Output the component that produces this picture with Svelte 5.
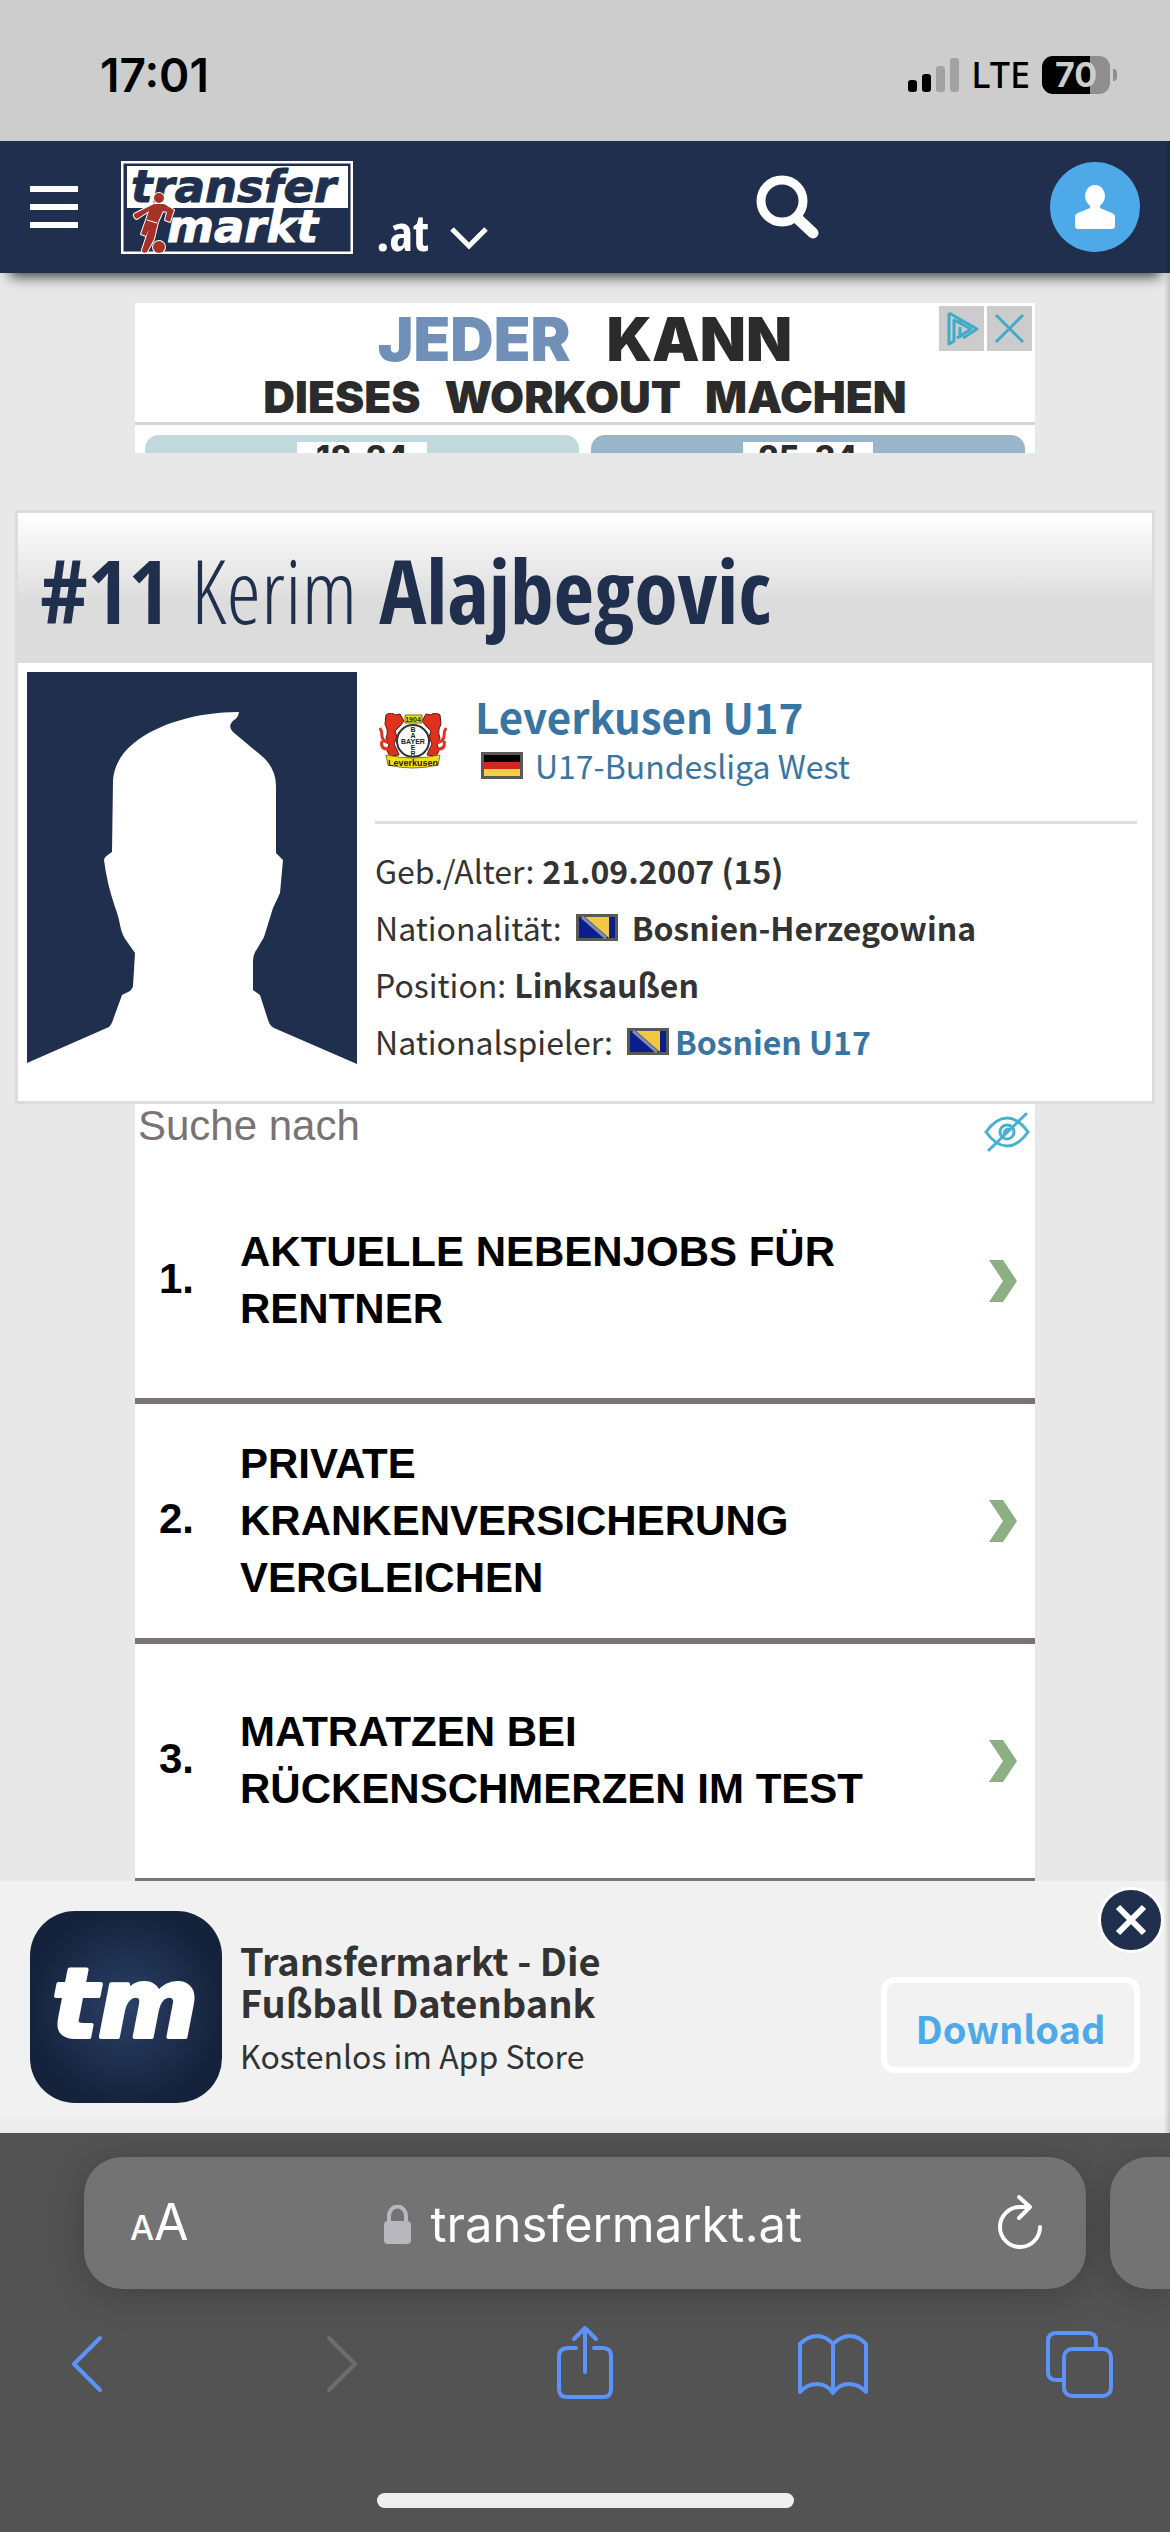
<script>
  const offers = [
    'AKTUELLE NEBENJOBS FÜR RENTNER',
    'PRIVATE KRANKENVERSICHERUNG VERGLEICHEN',
    'MATRATZEN BEI RÜCKENSCHMERZEN IM TEST'
  ];
</script>

{#snippet bosnia()}
  <svg class="flag" viewBox="0 0 42 27" role="img" aria-label="Bosnien-Herzegowina">
    <rect width="42" height="27" fill="#595959" />
    <rect x="3" y="3" width="36" height="21" fill="#0a1f8c" />
    <path d="M9 3h24v21z" fill="#f3c843" />
    <path d="M6 3l24 21" stroke="#7f8cae" stroke-width="3" />
  </svg>
{/snippet}

<div class="screen">
  <div class="status">
    <time>17:01</time>
    <div class="status-right">
      <svg class="signal" viewBox="0 0 51 34" aria-hidden="true">
        <rect y="22" width="9" height="12" rx="3" />
        <rect x="14" y="16" width="9" height="18" rx="3" />
        <rect x="28" y="8" width="9" height="26" rx="3" fill="#a2a2a2" />
        <rect x="42" width="9" height="34" rx="3" fill="#a2a2a2" />
      </svg>
      <span class="lte">LTE</span>
      <div class="battery"><span>70</span></div>
    </div>
  </div>

  <div class="web">
    <header class="top">
      <button class="menu" aria-label="Menü"><i></i><i></i><i></i></button>
      <a class="logo" href="#home" aria-label="Transfermarkt">
        <svg viewBox="0 0 232 93">
          <rect x="1" y="1" width="230" height="91" fill="#1f2f4d" stroke="#fff" stroke-width="3" />
          <rect x="6" y="5" width="221" height="42" fill="#fff" />
          <text class="wordmark" x="10" y="41" fill="#1f2f4d" stroke="#1f2f4d">transfer</text>
          <text class="wordmark" x="46" y="81" fill="#fff" stroke="#fff">markt</text>
          <g fill="#a63126" stroke="#fff" stroke-width="2" paint-order="stroke" stroke-linejoin="round">
            <path d="M13 55Q12 53 15 52L33 43L43 43L53 49L49 61L44 59L46 51L42 50L37 61L33 78L26 91Q21 93 21 89L28 68L25 75L20 73L25 59L28 50L16 58Q14 58 13 55Z" />
            <circle cx="38" cy="37" r="5" />
            <circle cx="38" cy="86" r="6" />
          </g>
          <path d="M26 59l10 3" stroke="#fff" stroke-width="1" />
        </svg>
      </a>
      <button class="domain">
        <span>.at</span>
        <svg viewBox="0 0 40 24" aria-hidden="true"><path d="M3 3l17 17 17-17" fill="none" stroke="#fff" stroke-width="5" /></svg>
      </button>
      <button class="search" aria-label="Suche">
        <svg viewBox="0 0 64 64"><circle cx="26" cy="26" r="21" fill="none" stroke="#fff" stroke-width="9" /><path d="M41 43l16 15" stroke="#fff" stroke-width="11" stroke-linecap="round" /></svg>
      </button>
      <button class="avatar" aria-label="Profil">
        <svg viewBox="0 0 90 90"><circle cx="45" cy="45" r="45" fill="#4da9e8" /><ellipse cx="45" cy="34" rx="10" ry="11" fill="#fff" /><path d="M40 43h10v3l12 5q3 1 3 4v9q0 3-3 3H28q-3 0-3-3v-9q0-3 3-4l12-5z" fill="#fff" /></svg>
      </button>
    </header>

    <section class="promo" aria-label="Anzeige">
      <h2><b>JEDER</b> <span>KANN</span></h2>
      <h3><span>DIESES</span> <span>WORKOUT</span> <span>MACHEN</span></h3>
      <div class="promo-cards">
        <div class="age"><span>18-24</span></div>
        <div class="age blue"><span>25-34</span></div>
      </div>
      <div class="promo-tools">
        <button aria-label="AdChoices"><svg viewBox="0 0 45 45"><path d="M10 7v31l5-3V14l17 9-14 9" fill="none" stroke="#3fabc9" stroke-width="3" stroke-linejoin="round" /><path d="M10 7l28 16-14 9M21 21v11" fill="none" stroke="#3fabc9" stroke-width="3" stroke-linejoin="round" /><circle cx="21" cy="16" r="2" fill="#3fabc9" /></svg></button>
        <button aria-label="Anzeige schließen"><svg viewBox="0 0 45 45"><path d="M9 9l27 27M36 9L9 36" stroke="#3fabc9" stroke-width="3" /></svg></button>
      </div>
    </section>

    <main class="player">
      <h1><strong>#11</strong> <span>Kerim</span> <strong>Alajbegovic</strong></h1>
      <div class="player-body">
        <svg class="photo" viewBox="0 0 330 420" role="img" aria-label="Kerim Alajbegovic">
          <rect width="330" height="392" fill="#1f2f4d" />
          <path fill="#fff" d="M0 420V391L82 355Q85 352 87 345L95 323L99 321Q105 319 106 314L108 281L101 271Q95 264 93 253Q92 246 88 235Q80 212 77 188Q77 185 85 180L86 108Q88 86 107 71C130 52 170 40 212 40Q211 46 207 48Q200 54 206 60L236 85Q249 97 249 114V181L256 188L253 221L246 236L237 265L230 277Q226 282 226 290V318L233 323L241 348Q243 354 247 356L330 392V420Z" />
        </svg>
        <div class="info">
          <div class="club">
            <svg class="crest" viewBox="0 0 70 56" role="img" aria-label="Bayer Leverkusen">
              <g fill="#e0301e" stroke="#5c1510" stroke-width="1">
                <path d="M8 2q5-4 9 0l5-1 4 7-4 5-5 5 2 6-3 7 3 6 2 5-9 1-3-5 2-7-3-6q2-4 1-9l-2-5z" />
                <path d="M11 30q-7-2-7-7t-2-8M10 36q-8 0-6-8" fill="none" stroke="#e0301e" stroke-width="3" />
                <path d="M62 2q-5-4-9 0l-5-1-4 7 4 5 5 5-2 6 3 7-3 6-2 5 9 1 3-5-2-7 3-6q-2-4-1-9l2-5z" />
                <path d="M59 30q7-2 7-7t2-8M60 36q8 0 6-8" fill="none" stroke="#e0301e" stroke-width="3" />
              </g>
              <path d="M27 2h17v8H27z" fill="#f2df1c" stroke="#7a6f10" />
              <circle cx="35" cy="28" r="16" fill="#fff" stroke="#333" stroke-width="2" />
              <path d="M8 42q27 6 54 0l-2 10q-25 6-50 0z" fill="#f2df1c" stroke="#8a7d10" />
              <g class="crest-text" text-anchor="middle">
                <text x="35" y="9">1904</text>
                <text x="35" y="31">BAYER</text>
                <text x="35" y="19">B</text><text x="35" y="25">A</text><text x="35" y="37">E</text><text x="35" y="43">R</text>
                <text class="crest-name" x="35" y="53">Leverkusen</text>
              </g>
            </svg>
            <div class="club-text">
              <a class="club-name" href="#club">Leverkusen U17</a>
              <div class="league">
                <svg class="flag" viewBox="0 0 42 27" role="img" aria-label="Deutschland">
                  <rect width="42" height="27" fill="#595959" /><rect x="3" y="3" width="36" height="7" fill="#000" /><rect x="3" y="10" width="36" height="7" fill="#d0281c" /><rect x="3" y="17" width="36" height="7" fill="#f7ce46" />
                </svg>
                <a href="#league">U17-Bundesliga West</a>
              </div>
            </div>
          </div>
          <dl>
            <div><dt>Geb./Alter:</dt><dd>21.09.2007 (15)</dd></div>
            <div class="nation"><dt>Nationalität:</dt><dd>{@render bosnia()}Bosnien-Herzegowina</dd></div>
            <div><dt>Position:</dt><dd>Linksaußen</dd></div>
            <div class="squad"><dt>Nationalspieler:</dt><dd>{@render bosnia()}<a href="#bosnien">Bosnien U17</a></dd></div>
          </dl>
        </div>
      </div>
    </main>

    <section class="offers">
      <div class="offers-head">
        <span>Suche nach</span>
        <button aria-label="Anzeige ausblenden"><svg viewBox="0 0 46 40" fill="none" stroke="#4ab0cf" stroke-width="3" stroke-linecap="round"><path d="M2 20Q12 6 23 6T44 20Q34 34 23 34T2 20Z" /><circle cx="23" cy="20" r="7" /><path d="M20 23q0-5 4-6M5 38L42 2" /></svg></button>
      </div>
      <ol>
        {#each offers as offer, i}
          <li><a href="#offer{i + 1}">
            <span class="num">{i + 1}.</span><span class="offer">{offer}</span>
            <svg viewBox="0 0 30 42" aria-hidden="true"><path d="M1 0h14l14 21-14 21H1l14-21z" fill="#8cb084" /></svg>
          </a></li>
        {/each}
      </ol>
    </section>

    <aside class="app">
      <svg class="app-icon" viewBox="0 0 192 192" role="img" aria-label="Transfermarkt App">
        <defs><radialGradient id="glow"><stop stop-color="#2b4168" /><stop offset="1" stop-color="#15223b" /></radialGradient></defs>
        <rect width="192" height="192" rx="45" fill="url(#glow)" />
        <text class="tm" x="22" y="126" fill="#fff" stroke="#fff">tm</text>
      </svg>
      <div class="app-text"><strong>Transfermarkt - Die Fußball Datenbank</strong><span>Kostenlos im App Store</span></div>
      <a class="download" href="#download">Download</a>
      <button class="close" aria-label="Schließen"><svg viewBox="0 0 60 60"><path d="M17 17l26 26M43 17L17 43" stroke="#fff" stroke-width="6" /></svg></button>
    </aside>
  </div>

  <footer class="safari">
    <div class="tabs">
      <div class="address">
        <button class="aa" aria-label="Textgröße"><small>A</small>A</button>
        <button class="url">
          <svg viewBox="0 0 27 40" aria-hidden="true"><path d="M5 18V11a8 9 0 0 1 17 0v7" fill="none" stroke="#b8b7bd" stroke-width="4" /><rect y="16" width="27" height="23" rx="4" fill="#b8b7bd" /></svg>
          <span>transfermarkt.at</span>
        </button>
        <button class="reload" aria-label="Neu laden"><svg viewBox="0 0 46 56" fill="none" stroke="#fff" stroke-width="4" stroke-linecap="round" stroke-linejoin="round"><path d="M43 33A20 20 0 1 1 23 13H33M22 3l11 10-11 11" /></svg></button>
      </div>
      <div class="next-tab"></div>
    </div>
    <nav>
      <button aria-label="Zurück"><svg viewBox="0 0 80 76"><path d="M54 14L28 40l26 26" /></svg></button>
      <button aria-label="Vor" disabled><svg viewBox="0 0 80 76"><path d="M34 14l26 26-26 26" /></svg></button>
      <button aria-label="Teilen"><svg viewBox="0 0 80 76"><path d="M33 24h-7q-10 0-10 8v33q0 8 8 8h36q8 0 8-8V32q0-8-8-8h-9M42 48V4M31 15L42 4l11 11" /></svg></button>
      <button aria-label="Lesezeichen"><svg viewBox="0 0 80 76"><path d="M41 20Q34 12 25 12T8 20V68Q15 60 25 60T41 69Q47 60 57 60T74 68V20Q67 12 58 12T41 20V68" /></svg></button>
      <button aria-label="Tabs"><svg viewBox="0 0 80 76"><rect x="24" y="25" width="47" height="47" rx="8" /><path d="M24 56h-7q-9 0-9-8V17q0-8 8-8h32q8 0 8 8v8" /></svg></button>
    </nav>
    <div class="home"></div>
  </footer>
</div>

<style>
  :global(body) { margin: 0; background: #535353; }
  .screen { font-family: "Noto Sans CJK SC", "Noto Sans", sans-serif; color: #333; overflow: hidden; }
  * { box-sizing: border-box; }
  button { border: 0; padding: 0; background: none; color: inherit; font: inherit; cursor: pointer; }
  a { color: #3975a2; text-decoration: none; }
  svg { display: block; }
  h1, h2, h3, dl, dd, ol { margin: 0; padding: 0; }

  .status { display: flex; justify-content: space-between; align-items: center; height: 141px; padding: 8px 55px 0 100px; background: #cdcdcd; color: #000; font-family: Inter, sans-serif; }
  time { font-size: 46px; font-weight: 600; }
  .status-right { display: flex; align-items: center; gap: 12px; }
  .signal { width: 51px; height: 34px; }
  .lte { font-size: 36px; font-weight: 500; font-family: "Noto Sans", sans-serif; line-height: 40px; }
  .battery { position: relative; display: flex; align-items: center; justify-content: center; width: 68px; height: 38px; margin-right: 5px; border-radius: 11px; background: linear-gradient(90deg, #000 70%, #8f8f8f 70%); color: #cdcdcd; font-size: 34px; font-weight: 700; }
  .battery::after { content: ""; position: absolute; left: 71px; width: 4px; height: 12px; border-radius: 0 6px 6px 0; background: #8f8f8f; }

  .web { position: relative; background: #e8e8e8; }
  .web::after { content: ""; position: absolute; top: 0; right: 0; width: 6px; height: 100%; background: linear-gradient(90deg, transparent, rgba(0, 0, 0, 0.16)); }
  .top { position: relative; display: flex; align-items: center; height: 132px; padding: 0 30px; background: #1f2f4d; box-shadow: 0 14px 12px -10px rgba(0, 0, 0, 0.7); }
  .menu { display: flex; flex-direction: column; gap: 12px; width: 48px; }
  .menu i { height: 6px; background: #fff; }
  .logo { width: 232px; margin-left: 43px; }
  .wordmark { font: italic 700 45px "DejaVu Sans", sans-serif; stroke-width: 1; stroke-linejoin: round; }
  .tm { font: italic 700 96px "DejaVu Sans", sans-serif; stroke-width: 4; stroke-linejoin: round; }
  .domain { display: flex; align-items: center; gap: 20px; align-self: flex-end; margin: 0 0 14px 23px; color: #fff; }
  .domain span { font: 700 50px/54px "Open Sans Condensed", "Roboto Condensed", "Noto Sans CJK SC", sans-serif; }
  .domain svg { width: 40px; margin-top: 12px; }
  .search { margin-left: auto; width: 64px; }
  .avatar { width: 90px; margin-left: 230px; }

  .promo { position: relative; height: 150px; margin: 30px 135px 57px; overflow: hidden; background: #fff; color: #2c2b2b; text-align: center; font-family: Inter, sans-serif; }
  .promo h2 { display: flex; justify-content: center; gap: 36px; padding-top: 4px; font-size: 60px; line-height: 64px; font-weight: 900; }
  .promo h2 b { color: #7090b8; font-weight: 900; }
  .promo h3 { display: flex; justify-content: center; gap: 24px; height: 54px; border-bottom: 3px solid #d4d4d4; font-size: 44px; line-height: 52px; font-weight: 900; }
  .promo-cards { display: grid; grid-template-columns: 1fr 1fr; gap: 12px; padding: 10px; }
  .age { display: flex; justify-content: center; height: 60px; padding-top: 7px; border-radius: 14px; background: #c1d8dd; }
  .age.blue { background: #98b5c9; }
  .age span { width: 130px; height: 50px; background: #fff; font-size: 32px; line-height: 32px; font-weight: 800; }
  .promo-tools { position: absolute; top: 3px; right: 3px; display: flex; gap: 3px; }
  .promo-tools button { width: 45px; height: 45px; background: #ccc; }

  .player { margin: 0 15px; border: 3px solid #dcdcdc; background: #fff; }
  h1 { height: 150px; padding: 18px 22px 0; background: linear-gradient(#fff, #dcdcdc 60%); color: #1f2f4d; font: 700 88px/118px "Open Sans Condensed", "Roboto Condensed", "Noto Sans CJK SC", sans-serif; white-space: nowrap; }
  h1 span { font-family: "Open Sans Condensed Light", "Open Sans Condensed", "Roboto Condensed", sans-serif; font-weight: 300; }
  .player-body { display: flex; gap: 18px; padding: 9px 15px 9px 9px; }
  .photo { width: 330px; height: 420px; flex: none; }
  .info { flex: 1; }
  .club { display: flex; height: 149px; padding: 17px 0 0 3px; }
  .crest { width: 70px; height: 56px; margin-top: 24px; }
  .crest-text { font: 700 7px "Liberation Sans", sans-serif; fill: #222; }
  .crest-name { font-size: 9px; }
  .club-text { margin-left: 27px; }
  .club-name { display: block; font-size: 42px; line-height: 54px; font-weight: 700; }
  .league { display: flex; align-items: center; gap: 12px; padding-left: 6px; font-size: 32px; line-height: 44px; }
  .flag { width: 42px; height: 27px; flex: none; }
  dl { border-top: 3px solid #dcdcdc; padding-top: 18px; font-size: 32px; line-height: 57px; }
  dl div { display: flex; gap: 8px; }
  dd { display: flex; align-items: center; gap: 14px; font-weight: 700; }
  dl .nation, dl .squad { gap: 14px; }
  .squad dd { gap: 6px; }

  .offers { margin: 0 135px; background: #fff; color: #000; font-family: "Liberation Sans", Arial, sans-serif; font-size: 42px; }
  .offers-head { display: flex; justify-content: space-between; align-items: flex-start; height: 60px; padding: 0 5px 0 3px; color: #7a7273; line-height: 43px; }
  .offers-head button { width: 46px; margin-top: 8px; }
  ol { list-style: none; }
  li { height: 240px; border-bottom: 6px solid #7a7273; }
  li:last-child { height: 237px; border-bottom-width: 3px; }
  li a { display: flex; align-items: center; height: 234px; padding: 0 17px 0 24px; color: #000; font-weight: 700; line-height: 57px; }
  .num { width: 81px; padding-bottom: 6px; }
  .offer { width: 650px; padding-bottom: 2px; }
  li svg { width: 30px; margin-left: auto; }

  .app { position: relative; display: flex; align-items: center; height: 252px; padding: 0 30px; background: linear-gradient(#f1f1f1 90%, #ececec); }
  .app-icon { width: 192px; flex: none; }
  .app-text { display: flex; flex-direction: column; gap: 8px; width: 400px; margin-left: 18px; padding-top: 4px; }
  .app-text strong { font-size: 38px; line-height: 42px; }
  .app-text span { font-size: 32px; line-height: 48px; }
  .download { display: flex; align-items: center; justify-content: center; width: 259px; height: 96px; margin: 36px 0 0 auto; padding-top: 4px; border: 6px solid #fff; border-radius: 14px; background: #f2f2f2; color: #4da9e8; font-size: 38px; font-weight: 700; }
  .close { position: absolute; top: 6px; right: 6px; width: 66px; height: 66px; border: 3px solid #fff; border-radius: 50%; background: #1f2f4d; }

  .safari { display: flex; flex-direction: column; background: #535353; color: #fff; font-family: Inter, sans-serif; }
  .tabs { display: flex; gap: 24px; padding: 24px 0 0 84px; }
  .address, .next-tab { height: 132px; background: #737373; box-shadow: 0 6px 36px rgba(0, 0, 0, 0.22); }
  .address { flex: 1; display: flex; align-items: center; justify-content: space-between; padding: 4px 43px 0 46px; border-radius: 38px; }
  .next-tab { width: 60px; border-radius: 38px 0 0 38px; }
  .aa { font-size: 50px; line-height: 60px; }
  .aa small { font-size: 34px; font-weight: 500; }
  .url { display: flex; align-items: center; gap: 20px; font-size: 49px; line-height: 60px; }
  .url svg { width: 27px; }
  .reload svg { width: 46px; margin-bottom: 6px; }
  nav { display: flex; justify-content: space-between; padding: 35px 50px 0 46px; }
  nav svg { width: 80px; fill: none; stroke: #5b93f9; stroke-width: 4; stroke-linecap: round; stroke-linejoin: round; }
  nav button:disabled svg { stroke: #6d6d6d; }
  .home { align-self: center; width: 417px; height: 15px; margin: 93px 0 24px; border-radius: 8px; background: #eee; }
</style>
